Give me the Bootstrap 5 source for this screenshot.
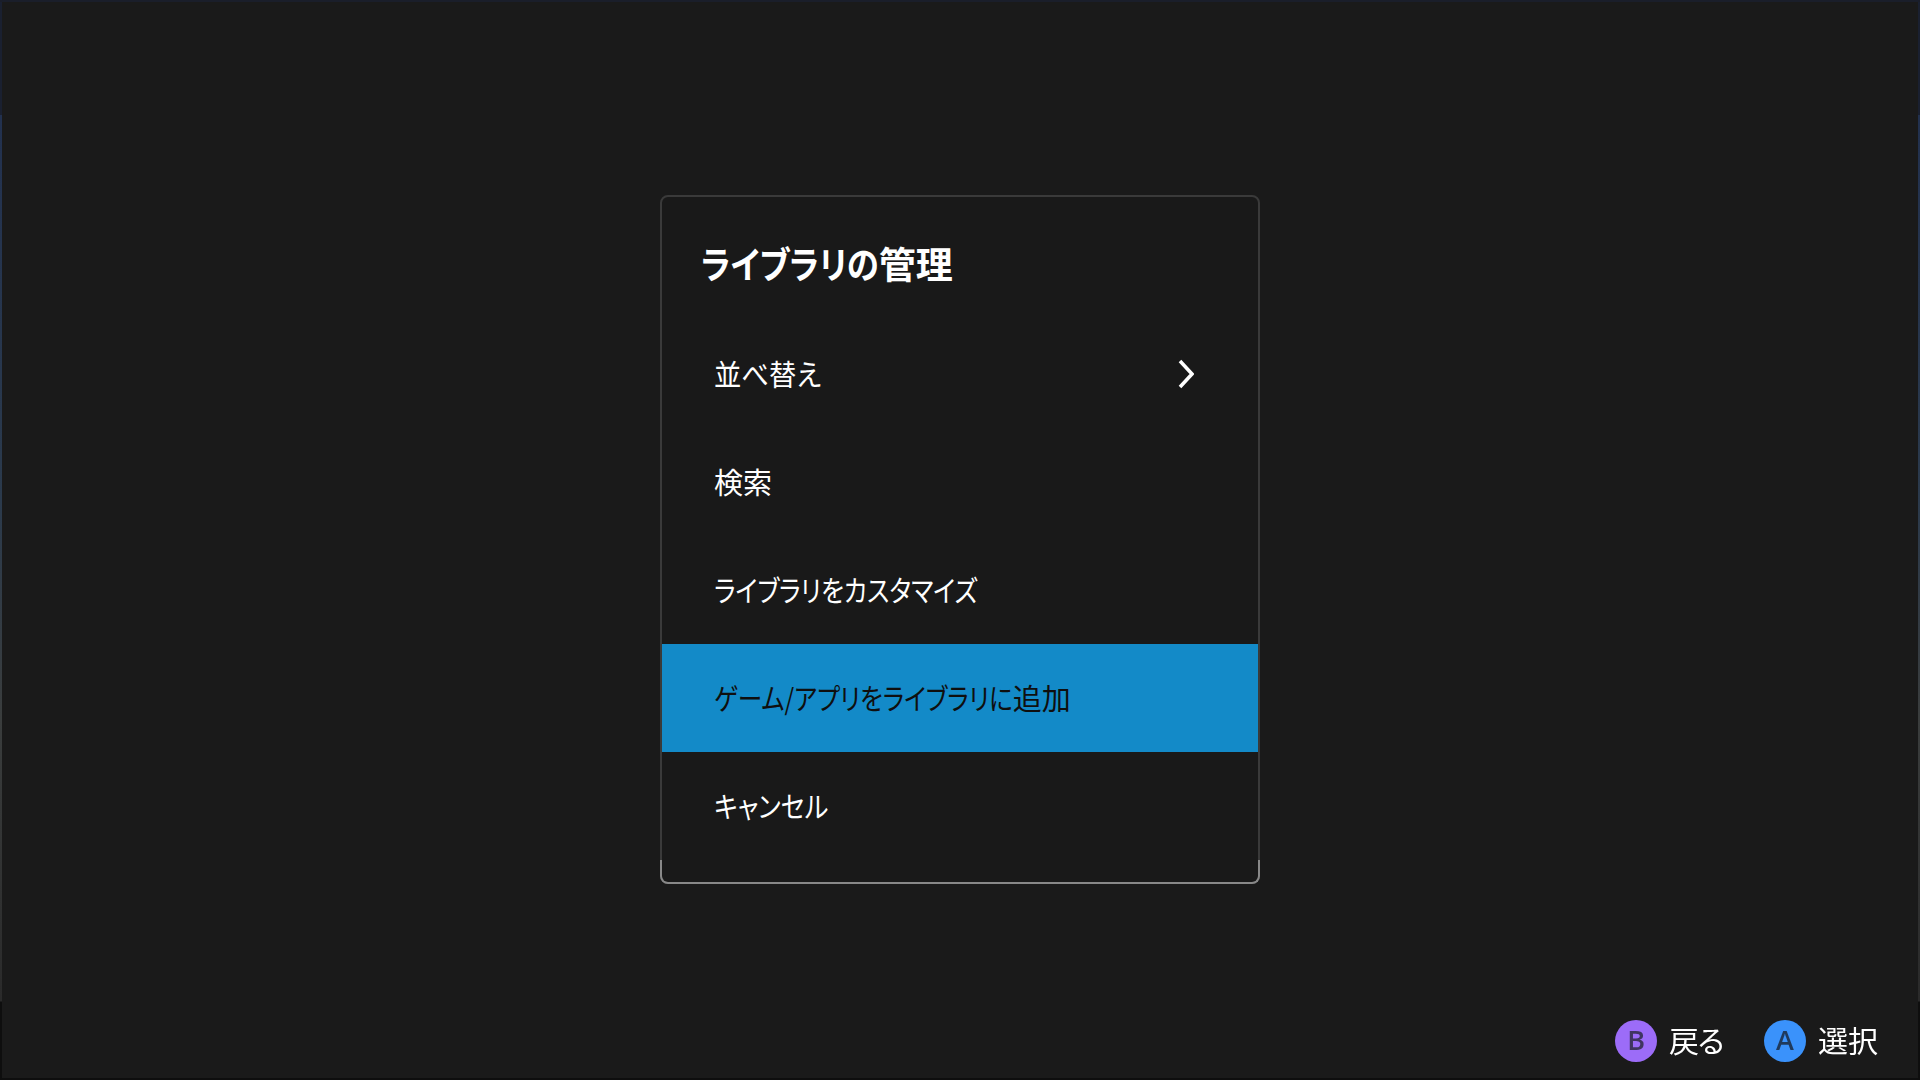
<!DOCTYPE html>
<html lang="ja">
<head>
<meta charset="utf-8">
<title>ライブラリの管理</title>
<link href="https://cdn.jsdelivr.net/npm/bootstrap@5.3.0/dist/css/bootstrap.min.css" rel="stylesheet">
<style>
html,body{height:100%}
body{background:#1a1a1a;color:#fff;font-family:"Noto Sans CJK JP","Noto Sans",sans-serif;font-feature-settings:"palt" 1;overflow:hidden}
.screen{height:1080px;width:1920px;padding:2px;background:
  linear-gradient(#1a1e2a,#1a1e2a) top/100% 2px no-repeat,
  linear-gradient(#0e0e0e,#0e0e0e) bottom/100% 2px no-repeat,
  linear-gradient(#1a2030 0 115px,#22314f 115px,#2b3a4c 500px,#3a3d3d 720px,#2a2a2a 1001px,#0e0e0e 1002px) left/2px 100% no-repeat,
  linear-gradient(#1a2030 0 115px,#22314f 115px,#2b3a4c 500px,#3a3d3d 720px,#2a2a2a 1001px,#0e0e0e 1002px) right/2px 100% no-repeat,
  #1a1a1a}
.manage-dialog{width:600px;height:689px;margin-top:193px;border:2px solid #3a3a3a;border-radius:8px;background:#191919;position:relative}
.manage-dialog::after{content:"";position:absolute;left:-2px;right:-2px;bottom:-2px;height:24px;border:2px solid #888;border-top:0;border-radius:0 0 8px 8px;pointer-events:none}
.manage-title{font-size:37px;font-weight:700;line-height:44px;margin:44px 0 0 39px;height:79px}
.manage-row{height:108px;flex-shrink:0;padding:0 64px 2px 52px;font-size:29px;font-weight:400;line-height:1}
.row-chevron{margin-top:2px}
.narrow-run{display:inline-block;transform-origin:0 50%;white-space:nowrap}
.narrow-title{transform:scaleX(.875);margin-right:-25.5px}
.narrow-mixed{transform:scaleX(.94)}
.narrow-kana{transform:scaleX(.857)}
.narrow-add{transform:scaleX(.85);margin-right:-52.5px}
.narrow-cancel{transform:scaleX(.87)}
.manage-row.is-active{background:#138ac8;color:#0f0f0f}
.hint-bar{position:fixed;right:42px;bottom:16px;gap:41px;font-size:30px;font-weight:400}
.hint-label{letter-spacing:-1.5px}
.hint-text{padding-bottom:2px}
.pad-btn{width:42px;height:42px;border-radius:50%;font-size:27px;font-weight:600;font-family:"Open Sans",sans-serif}
.pad-b{background:#9c6cf8;color:#3f3560}
.pad-a{background:#3a92fb;color:#1f3a5c}
</style>
</head>
<body>
<div class="screen d-flex justify-content-center align-items-start">
  <div class="manage-dialog d-flex flex-column">
    <div class="manage-title"><span class="narrow-run narrow-title">ライブラリの</span>管理</div>
    <div class="manage-row d-flex align-items-center justify-content-between">
      <span class="narrow-run narrow-mixed">並べ替え</span>
      <svg class="row-chevron" width="16" height="30" viewBox="0 0 16 30" fill="none" stroke="#fff" stroke-width="3.5"><path d="M2 2l12 13L2 28"/></svg>
    </div>
    <div class="manage-row d-flex align-items-center"><span>検索</span></div>
    <div class="manage-row d-flex align-items-center"><span class="narrow-run narrow-kana">ライブラリをカスタマイズ</span></div>
    <div class="manage-row is-active d-flex align-items-center"><span><span class="narrow-run narrow-add">ゲーム/アプリをライブラリに</span>追加</span></div>
    <div class="manage-row d-flex align-items-center"><span class="narrow-run narrow-cancel">キャンセル</span></div>
  </div>
</div>
<div class="hint-bar d-flex align-items-center">
  <div class="d-flex align-items-center"><span class="pad-btn pad-b d-flex align-items-center justify-content-center">B</span><span class="hint-label hint-text ms-2 ps-1">戻る</span></div>
  <div class="d-flex align-items-center"><span class="pad-btn pad-a d-flex align-items-center justify-content-center">A</span><span class="hint-text ms-2 ps-1">選択</span></div>
</div>
<script src="https://cdn.jsdelivr.net/npm/bootstrap@5.3.0/dist/js/bootstrap.bundle.min.js"></script>
</body>
</html>
